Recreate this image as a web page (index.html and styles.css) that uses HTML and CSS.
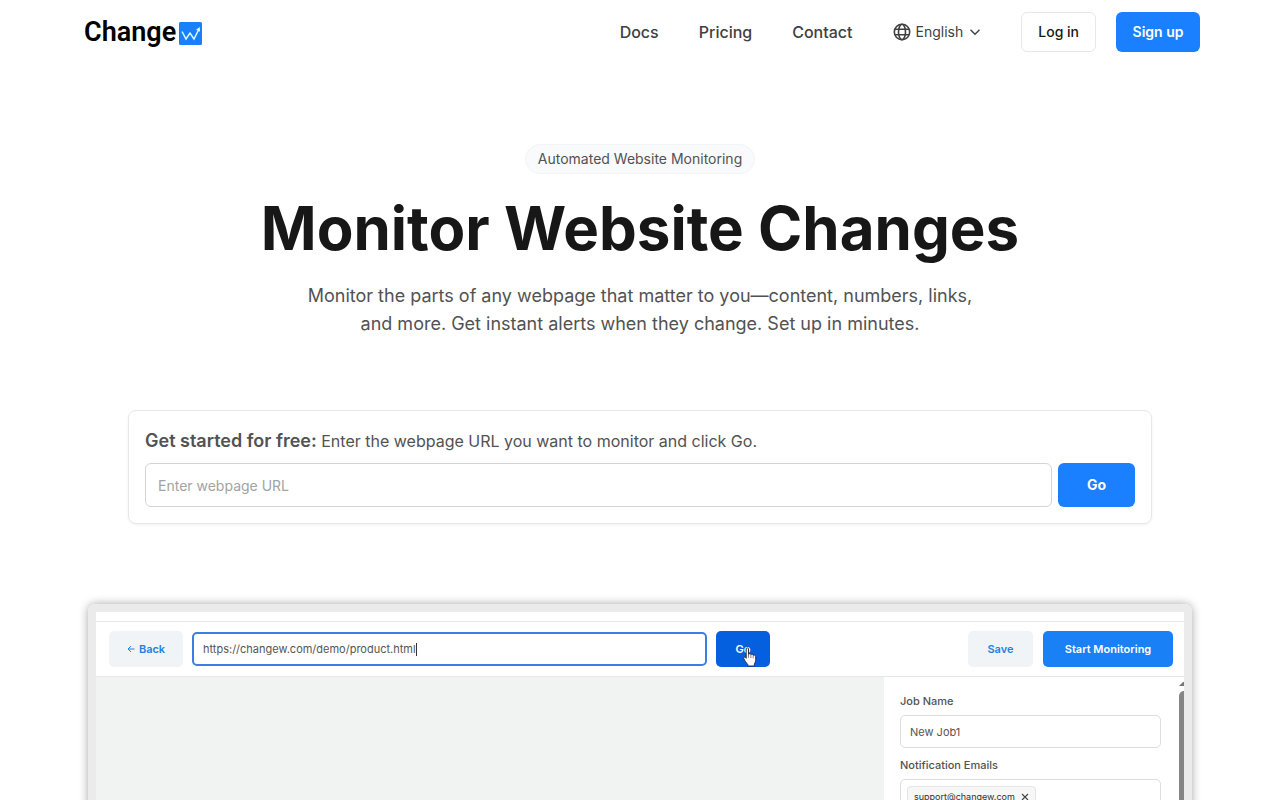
FILE: index.html
```html
<!DOCTYPE html>
<html lang="en">
<head>
<meta charset="utf-8">
<meta name="viewport" content="width=device-width, initial-scale=1">
<title>Changew - Monitor Website Changes</title>
<link rel="stylesheet" href="styles.css">
</head>
<body>
<header class="site-header">
  <a class="logo" href="#" aria-label="Changew">
    <span class="logo-text">Change</span>
    <svg class="logo-mark" viewBox="0 0 23 23" aria-hidden="true">
      <rect width="23" height="23" rx="1.5" fill="#1a80fa"/>
      <path d="M3 9.5 7 17 11 11 15 17 19.5 8" fill="none" stroke="#d9fbff" stroke-width="1.5"/>
      <path d="M17 7.8 20.8 5 21 9.8Z" fill="#d9fbff"/>
    </svg>
  </a>
  <nav class="nav">
    <a class="nav-link" href="#">Docs</a>
    <a class="nav-link" href="#">Pricing</a>
    <a class="nav-link" href="#">Contact</a>
    <button class="language" type="button">
      <svg width="18" height="18" viewBox="0 0 18 18" fill="none" stroke="currentColor" stroke-width="1.6" aria-hidden="true">
        <circle cx="9" cy="9" r="7.7"/>
        <ellipse cx="9" cy="9" rx="3.5" ry="7.7"/>
        <path d="M2 6.3H16M2 11.7H16"/>
      </svg>
      <span>English</span>
      <svg class="chevron" width="12" height="12" viewBox="0 0 12 12" fill="none" stroke="currentColor" stroke-width="1.4" aria-hidden="true">
        <path d="M1.5 3.8 6 8.2 10.5 3.8"/>
      </svg>
    </button>
    <div class="account">
      <a class="btn btn-outline" href="#">Log in</a>
      <a class="btn btn-primary" href="#">Sign up</a>
    </div>
  </nav>
</header>
<main>
  <section class="hero">
    <p class="badge">Automated Website Monitoring</p>
    <h1 class="title">Monitor Website Changes</h1>
    <p class="lead">Monitor the parts of any webpage that matter to you—content, numbers, links, and more. Get instant alerts when they change. Set up in minutes.</p>
  </section>
  <form class="start">
    <label class="start-label" for="url"><strong>Get started for free:</strong> Enter the webpage URL you want to monitor and click Go.</label>
    <div class="start-row">
      <input class="start-input" id="url" type="url" placeholder="Enter webpage URL">
      <button class="start-go" type="button">Go</button>
    </div>
  </form>
  <section class="demo" aria-label="Product demo">
    <div class="demo-top"></div>
    <div class="demo-bar">
      <button class="demo-btn demo-soft demo-back" type="button"><svg width="8" height="8" viewBox="0 0 8 8" fill="none" stroke="currentColor" stroke-width="1" aria-hidden="true"><path d="M7.5 4H1M4 1 1 4 4 7"/></svg>Back</button>
      <div class="demo-url">
        <input class="demo-url-input" type="text" aria-label="Page address" value="https://changew.com/demo/product.html">
        <span class="caret"></span>
      </div>
      <button class="demo-btn demo-go" type="button">Go
        <svg class="cursor" width="14" height="20" viewBox="0 0 14 20" aria-hidden="true">
          <path d="M3.2 1.8C3.2.5 5.4.5 5.5 1.8V7.2C6.2 6.3 7.7 6.6 7.9 7.6 8.6 6.9 10 7.2 10.2 8.3 11.2 7.7 12.6 8.3 12.7 9.6V13.6C12.7 15 11.6 16 11.4 17.2V19H4.8V17.5C3.5 16 1.3 13.2.8 11.4.5 10.2 1.9 9.7 2.6 10.5L3.2 11.3Z" fill="#fff" stroke="#222" stroke-width=".9" stroke-linejoin="round"/>
          <path d="M5.5 7V10.8M7.9 8V11M10.2 8.5V11.3" fill="none" stroke="#333" stroke-width=".6"/>
        </svg>
      </button>
      <div class="demo-actions">
        <button class="demo-btn demo-soft demo-save" type="button">Save</button>
        <button class="demo-btn demo-start" type="button">Start Monitoring</button>
      </div>
    </div>
    <div class="demo-body">
      <div class="demo-canvas"></div>
      <div class="demo-panel">
        <div class="demo-fields">
          <label class="demo-label" for="job">Job Name</label>
          <input class="demo-input" id="job" type="text" value="New Job1">
          <div class="demo-label">Notification Emails</div>
          <div class="demo-emails">
            <span class="chip">support@changew.com
              <button class="chip-remove" type="button" aria-label="Remove email"><svg width="8" height="8" viewBox="0 0 8 8" stroke="currentColor" stroke-width="1.1"><path d="M1 1 7 7M7 1 1 7"/></svg></button>
            </span>
          </div>
        </div>
        <div class="scroll">
          <svg width="5" height="4" viewBox="0 0 5 4" aria-hidden="true"><path d="M0 4 4 0H5V4Z" fill="#777"/></svg>
          <div class="scroll-thumb"></div>
        </div>
      </div>
    </div>
  </section>
</main>
</body>
</html>
```
FILE: styles.css
```css
* { box-sizing: border-box; }
html { scrollbar-width: none; }
body {
  margin: 0;
  background: #fff;
  color: #404040;
  font-family: Inter, "Liberation Sans", sans-serif;
  font-size: 16px;
  line-height: 24px;
}
a { color: inherit; text-decoration: none; }
button, input { font: inherit; margin: 0; }
button { cursor: pointer; }
svg { flex: none; }

.site-header {
  display: flex;
  align-items: center;
  justify-content: space-between;
  max-width: 1120px;
  height: 64px;
  margin: 0 auto;
}
.logo { display: flex; align-items: center; gap: 3px; padding-left: 4px; color: #000; }
.logo-text { font: 600 27px/40px Roboto, "Noto Sans", sans-serif; }
.logo-mark { width: 23px; height: 23px; margin-top: 3px; }
.nav { display: flex; align-items: center; gap: 40px; }
.nav-link { font-weight: 500; }
.language {
  display: flex;
  align-items: center;
  gap: 5px;
  padding: 0;
  border: 0;
  background: none;
  color: #404040;
  font-size: 14px;
}
.chevron { margin-left: 1px; }
.account { display: flex; gap: 20px; }
.btn {
  display: flex;
  align-items: center;
  justify-content: center;
  height: 40px;
  padding: 0 16px;
  border-radius: 6px;
  font-size: 14px;
  font-weight: 500;
}
.btn-outline { border: 1px solid #e5e7eb; color: #171717; }
.btn-primary { min-width: 84px; background: #1a80ff; color: #fff; font-weight: 600; }

.hero {
  display: flex;
  flex-direction: column;
  align-items: center;
  padding: 80px 16px 0;
  text-align: center;
}
.badge {
  margin: 0;
  padding: 4px 12px;
  border: 1px solid #f3f4f6;
  border-radius: 16px;
  background: #f9fafb;
  color: #525252;
  font-size: 14px;
  line-height: 20px;
}
.title {
  margin: 24px 0 0;
  color: #171717;
  font-size: 60px;
  font-weight: 700;
  line-height: 60px;
}
.lead {
  max-width: 672px;
  margin: 24px 0 0;
  color: #525252;
  font-size: 18px;
  line-height: 28px;
}

.start {
  max-width: 1024px;
  margin: 72px auto 0;
  padding: 16px;
  border: 1px solid #e5e7eb;
  border-radius: 8px;
  box-shadow: 0 1px 3px rgba(0, 0, 0, .06);
}
.start-label { display: block; line-height: 28px; color: #525252; }
.start-label strong { font-size: 18px; font-weight: 600; }
.start-row { display: flex; gap: 6px; margin-top: 8px; }
.start-input {
  flex: 1;
  min-width: 0;
  height: 44px;
  padding: 0 12px;
  border: 1px solid #d1d5db;
  border-radius: 6px;
  font-size: 14px;
}
.start-input::placeholder { color: #a3a3a3; }
.start-go {
  width: 77px;
  border: 0;
  border-radius: 6px;
  background: #1a80ff;
  color: #fff;
  font-size: 14px;
  font-weight: 700;
}

.demo {
  display: flex;
  flex-direction: column;
  max-width: 1104px;
  min-height: 620px;
  margin: 80px auto;
  border: 8px solid #ebebec;
  border-radius: 8px;
  box-shadow: 0 0 10px rgba(0, 0, 0, .35);
  font-size: 11px;
  line-height: 16px;
}
.demo-top { height: 10px; border-bottom: 1px solid #e5e7eb; }
.demo-bar {
  display: flex;
  align-items: center;
  gap: 9px;
  height: 55px;
  padding: 0 11px 0 13px;
  border-bottom: 1px solid #e5e7eb;
}
.demo-btn {
  height: 36px;
  padding: 0;
  border: 0;
  border-radius: 5px;
  color: #fff;
  font-weight: 600;
}
.demo-soft { background: #f1f4f6; color: #2580e0; }
.demo-back { display: flex; align-items: center; justify-content: center; gap: 4px; width: 74px; }
.demo-save { width: 65px; }
.demo-start { width: 130px; background: #1a80f5; }
.demo-url {
  display: flex;
  align-items: center;
  width: 515px;
  height: 34px;
  padding: 0 9px;
  border: 2px solid #3b80dc;
  border-radius: 5px;
}
.demo-url-input {
  field-sizing: content;
  padding: 0;
  border: 0;
  outline: 0;
  background: none;
  color: #555;
}
.caret { width: 1px; height: 13px; background: #333; }
.demo-go { position: relative; width: 54px; background: #0560df; }
.cursor { position: absolute; left: 27px; top: 16px; }
.demo-actions { display: flex; gap: 10px; margin-left: auto; }
.demo-body { display: flex; flex: 1; }
.demo-canvas { flex: 1; background: #f1f3f3; }
.demo-panel { display: flex; width: 300px; }
.demo-fields { flex: 1; padding: 16px 18px 16px 16px; }
.demo-label { display: block; color: #525252; font-weight: 500; }
.demo-input, .demo-emails {
  display: block;
  width: 100%;
  height: 33px;
  margin: 6px 0 9px;
  padding: 0 9px;
  border: 1px solid #ddd;
  border-radius: 5px;
  background: #fff;
  color: #555;
}
.demo-emails { height: auto; min-height: 36px; padding: 6px; }
.chip {
  display: inline-flex;
  align-items: center;
  gap: 6px;
  height: 22px;
  padding: 0 6px;
  border: 1px solid #e5e5e5;
  border-radius: 4px;
  background: #f7f7f7;
  color: #333;
  font-size: 9px;
}
.chip-remove { display: flex; padding: 0; border: 0; background: none; color: #444; }
.scroll { display: flex; flex-direction: column; gap: 5px; width: 5px; padding-top: 5px; }
.scroll-thumb { flex: 1; border-radius: 5px 0 0 5px; background: #858585; }
```
